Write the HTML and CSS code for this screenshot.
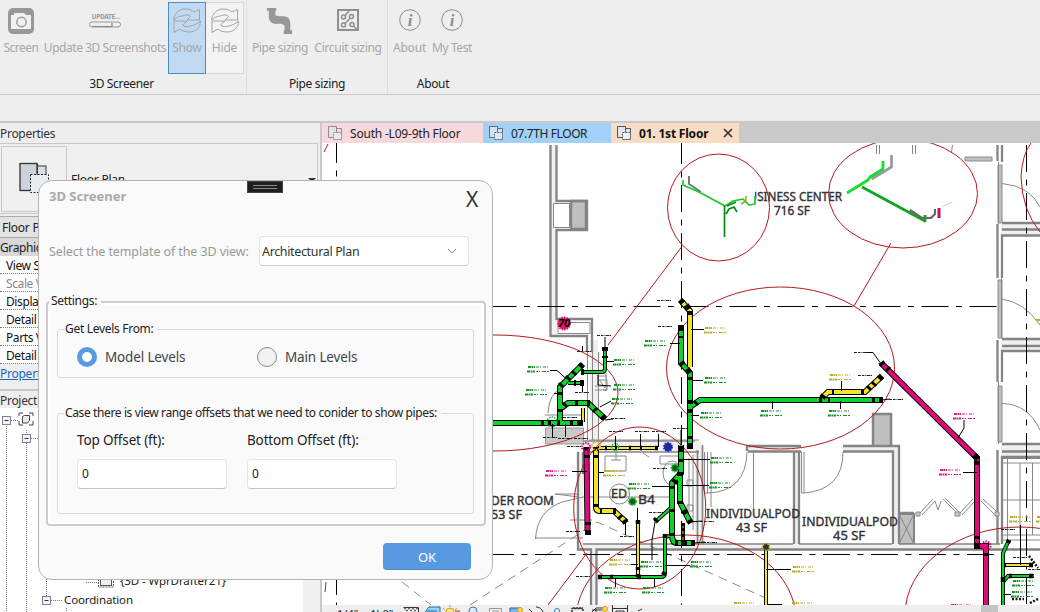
FILE: index.html
```html
<!DOCTYPE html>
<html lang="en">
<head>
<meta charset="utf-8">
<title>3D Screener</title>
<link rel="stylesheet" href="styles.css">
</head>
<body>
<div class="app">
  <header class="ribbon">
    <section class="group group-screener">
      <div class="tools">
        <div class="tool tool-screen">
          <svg class="icon" width="28" height="28" viewBox="0 0 28 28"><rect x="1" y="1" width="26" height="26" rx="5" fill="#989898"/><path d="M4 8h3V6h4v2h13v14H4z" fill="#f1f1f1"/><path d="M9 8l2-2h6l2 2" fill="#f1f1f1"/><circle cx="14.500" cy="15" r="4.700" fill="#f1f1f1" stroke="#989898" stroke-width="1.400"/></svg>
          <span>Screen</span>
        </div>
        <div class="tool tool-update">
          <svg class="icon" width="34" height="28" viewBox="0 0 34 28"><text x="3.500" y="12" class="update-text" textLength="28">UPDATE...</text><rect x="1.500" y="15" width="31" height="5" rx="2.500" fill="#eee" stroke="#999" stroke-width="1"/><path d="M4 19.500h20v-3.500" fill="none" stroke="#888" stroke-width="1.200"/></svg>
          <span>Update 3D Screenshots</span>
        </div>
        <div class="tool tool-show">
          <svg class="icon" width="30" height="28" viewBox="0 0 30 28"><use href="#refresh"/></svg>
          <span>Show</span>
        </div>
        <div class="tool tool-hide">
          <svg class="icon" width="30" height="28" viewBox="0 0 30 28"><use href="#refresh"/></svg>
          <span>Hide</span>
        </div>
      </div>
      <h2>3D Screener</h2>
    </section>
    <section class="group group-pipe">
      <div class="tools">
        <div class="tool tool-pipe">
          <svg class="icon" width="30" height="30" viewBox="0 0 30 30"><path d="M1 1h10v3h-1v5h1l3 1h4c5 0 8 2 8 8v7h2v4H19v-4h1v-5l-3-2h-4C6 19 3 15 3 10V4H1z" fill="#979797"/></svg>
          <span>Pipe sizing</span>
        </div>
        <div class="tool tool-circuit">
          <svg class="icon" width="24" height="28" viewBox="0 0 24 28" fill="none" stroke="#8f8f8f"><rect x="2" y="3" width="20" height="20" stroke-width="2"/><g stroke-width="1.500"><circle cx="7.500" cy="10" r="2"/><circle cx="15.500" cy="9.500" r="2"/><circle cx="7.500" cy="18" r="2"/><circle cx="16" cy="17.500" r="2"/><path d="M9 8.500l4-4.500M9 16.500l5-5M17.500 19l3 3"/></g></svg>
          <span>Circuit sizing</span>
        </div>
      </div>
      <h2>Pipe sizing</h2>
    </section>
    <section class="group group-about">
      <div class="tools">
        <div class="tool tool-about">
          <svg class="icon" width="24" height="28" viewBox="0 0 24 28"><circle cx="12" cy="13" r="10.300" fill="none" stroke="#8d8d8d" stroke-width="1"/><text x="12" y="19" class="info">i</text></svg>
          <span>About</span>
        </div>
        <div class="tool tool-test">
          <svg class="icon" width="24" height="28" viewBox="0 0 24 28"><circle cx="12" cy="13" r="10.300" fill="none" stroke="#8d8d8d" stroke-width="1"/><text x="12" y="19" class="info">i</text></svg>
          <span>My Test</span>
        </div>
      </div>
      <h2>About</h2>
    </section>
  </header>
  <div class="options-bar"></div>
  <main class="workspace">
    <aside class="side">
      <h3 class="side-title">Properties</h3>
      <div class="type-box">
        <div class="type-thumb">
          <svg width="32" height="32" viewBox="0 0 32 32"><rect x="17" y="4" width="10" height="24" fill="#d9dee6" stroke="#333"/><rect x="1" y="1.500" width="17" height="27" fill="#ccd3dd" stroke="#333" stroke-width="1.300"/><rect x="11.500" y="12.500" width="18" height="18" fill="#e9edf2" stroke="#222" stroke-dasharray="2 1.500"/><path d="M18.500 2v11" stroke="#222" stroke-dasharray="2 1.500"/></svg>
        </div>
        <span class="type-name">Floor Plan</span>
        <span class="caret"></span>
      </div>
      <div class="selector">Floor Plan: 01. 1st Floor</div>
      <div class="cat">Graphics</div>
      <div class="prop">View Scale</div>
      <div class="prop dim">Scale Value</div>
      <div class="prop">Display Model</div>
      <div class="prop">Detail Level</div>
      <div class="prop">Parts Visibility</div>
      <div class="prop">Detail Number</div>
      <div class="help">Properties help</div>
      <h3 class="side-title browser-title">Project Browser</h3>
      <div class="tree">
        <svg width="303" height="204" viewBox="0 408 303 204">
          <g stroke="#777" stroke-dasharray="1 1"><path d="M6.500 426v186M26.500 430v4M26.500 443v169M46.500 579v17M11 420.500h7M31 438.500h8M86 582.500h11M51 600.500h11M66.500 608v4"/></g>
          <g fill="#f3f4fa" stroke="#7d8290"><rect x="2.500" y="416.500" width="8" height="8"/><rect x="22.500" y="434.500" width="8" height="8"/><rect x="42.500" y="596.500" width="8" height="8"/></g>
          <path d="M4.500 420.500h4M24.500 438.500h4M44.500 600.500h4" stroke="#334"/>
          <g fill="none" stroke="#444"><path d="M23 413h-4v3M29 413h4v3M19 421v4h4M33 421v4h-4"/><path d="M22.500 416.500l2-1h5v5l-2 2.500h-5z" fill="#e8eaee"/></g>
          <rect x="100.500" y="576" width="11" height="9.500" fill="#eee" stroke="#555"/><path d="M98.500 576v11h15v-11" fill="none" stroke="#555" stroke-dasharray="2 1"/>
          <text x="120" y="585" class="tree-text" textLength="106">{3D - WprDrafter21}</text>
          <text x="64" y="603.500" class="tree-text" textLength="69">Coordination</text>
        </svg>
      </div>
    </aside>
    <section class="view">
      <nav class="tabs">
        <div class="tab tab-south"><svg width="16" height="16" viewBox="0 0 16 16"><use href="#sheet"/></svg><span>South -L09-9th Floor</span></div>
        <div class="tab tab-seven"><svg width="16" height="16" viewBox="0 0 16 16"><use href="#sheet"/></svg><span>07.7TH FLOOR</span></div>
        <div class="tab tab-first"><svg width="16" height="16" viewBox="0 0 16 16"><use href="#sheet"/></svg><span>01. 1st Floor</span><svg class="close" width="10" height="10" viewBox="0 0 10 10"><path d="M1 1l8 8M9 1l-8 8" stroke="#333" stroke-width="1.700"/></svg></div>
      </nav>
      <svg class="plan" width="718" height="462" viewBox="322 143 718 462">
        <defs>
          <g id="refresh" fill="none" stroke="#a3a3a3" stroke-width="1" stroke-linejoin="round"><path d="M1.500 13C2 7 7 2 13 2c4 0 7 1 9 3l5.500-2.500V13H15l3.500-3.500c-2-2-5-2-8-.5-2 0-6 1-9 4z"/><path d="M28.500 14c0 7-5 11-11.500 11-4 0-7-1-9-3l-6 3.500V14h13l-4.500 4c2 2 5 2 8 1 3-.500 7-2 10-5z"/></g>
          <g id="sheet" stroke="#555" fill="#dfe6ef"><path d="M7.500 3.500h7v11h-7z"/><path d="M1.500 1.500h8v11h-8z"/><path d="M6.500 7.500h8v7h-8z" fill="#edf1f6" stroke-dasharray="2 1"/></g>
          <g id="tag" fill="none" stroke="currentColor"><path d="M1 1h7" stroke-width="1.800" stroke-dasharray="3 .5 2 .5"/><path d="M9 1h13" stroke-dasharray="3 1 1 2" stroke-width="1"/><path d="M0 5.500h8" stroke-width="1.800" stroke-dasharray="3 .5 2 .5"/><path d="M9 5.500h14" stroke-dasharray="2 1 1 2 4 1" stroke-width="1"/></g>
          <path id="mark" d="M0 0h3M4 0h2M6.500 0h1M8.500 0h4M13 0h1" stroke="#222" stroke-width="1"/>
          <path id="green" d="M490 423H583M560 423V387L582 365M560 409L568 403H588L604 418M681 328V363L690 373V447M690 407L700 400H880M681 445V473L672 483V536Q672 543 678 543H693M680 472V502L690 522"/>
          <path id="green-thin" d="M568 383H583M581 372H602Q605 372 605 368V347M672 507L655 522M673 535L665 537V573Q665 577 661 577H598M1003 605V553L1009 540M1003 582L1008 576H1034"/>
          <path id="yellow" d="M682 302L690 311V367M596 448V507Q596 511 600 511H614L626 522M822 398L828 392H865L882 376"/>
          <path id="yellow-thin" d="M598 448H658M638 522V576M766 549V605M1004 565H1033M583 422V408"/>
          <path id="magenta" d="M881 363L977 458V546H986V605M586.500 448L587.500 531"/>
        </defs>

        <rect x="322" y="143" width="718" height="462" fill="#fff"/>

        <!-- walls -->
        <g fill="#bfbfbf" stroke="#848484">
          <path d="M549.500 145h8v192h-8z" fill="#f1f1f1" stroke="none"/>
          <path d="M571 201h15v28h-15zM873 414h18v33h-18z" stroke-width="2.500"/>
          <path d="M899 514h15v30h-15z" stroke-width="2"/>
          <path d="M899 514l15 30M914 514l-15 30" stroke-width="1"/>
          <path d="M545.500 428h38v16h-38z" stroke="#999" fill="#c9c9c9"/>
          <path d="M965 157h27v4h-27zM998 165h4v58h-4zM998 280h4v58h-4zM998 386h4v56h-4z" stroke="#8c8c8c"/>
        </g>
        <g fill="#f0f0f0"><path d="M577 544h423v7H577zM583 441h118v11H583zM695 445h8v99h-8zM747 446h55v6h-55zM843 446h56v6h-56zM793 450h6v94h-6zM893 450h6v94h-6zM1001 223h40v13h-40zM1001 339h40v12h-40zM1001 443h40v13h-40zM590 340h8v100h-8zM577 452h6v92h-6zM591 550h5v55h-5z"/></g>
        <g fill="none" stroke="#848484" stroke-width="2.300">
          <path d="M550.500 145V336H587V352M556.500 145V201H587V230H556.500V319H592V352"/>
          <path d="M578 452V549.500H591V605M596.500 605V549.500H1040M583 452V474M748 451.500H801M843 451.500H893V544M799 452V544M794 452V544M899 544V446H843M801 446H747V451M899 513H914"/>
          <path d="M583 544H793M799 544H892M899 544H1000" stroke-width="1.500"/>
          <path d="M583 441H695M583 452H699M697.500 450V544M702.500 445V544" stroke-width="1.700"/>
          <path d="M1002 145V162M997.500 145V161M1002 223H1040M1002 229.500H1040M1040 235.500H1002V278M997.500 224V278M1002 339H1040M1002 346H1040M1040 351H1002V382M997.500 340V382M1002 444H1040M1002 451.500H1040M1040 457H1002V544M997.500 450V544"/>
        </g>
        <g fill="none" stroke="#888" stroke-width="1">
          <path d="M553.500 203.500h16v24h-16z" fill="#fff"/>
          <path d="M558 322.500h32v11h-32zM587.500 352v88M592.500 352v88M589 440h110M598.500 440V352"/>
          <path d="M876.500 145v9M879.500 145v9M912.500 145v9M915.500 145v9M951.500 152l1-7M998.500 162v62M1001.500 278v60M998.500 382v62"/>
          <path d="M1002 183.500Q1030 186 1040 207M1002 299Q1024 302 1040 325M1002 403.500Q1028 404 1040 430"/>
          <path d="M801.500 452v41h2.500v-41M804 493Q843 490 843 452M747 452Q746 492 707 493M704.500 452v41h3v-41M753.500 452v58"/>
          <path d="M920 513L933 499M922 515L935 501L938 510L941 501M943 499L957 513M945 498L959 512M960 513L973 499M962 515L975 501M981 501L994 514M983 499L997 512"/>
          <path d="M916 512h4v4h-4zM955 512h5v4h-5zM995 512h4v4h-4z" fill="#ccc"/>
          <path d="M1003 458.500h37M1003 463h37M1003 535h37M1003 540h37M1007.500 457v87M1020 463v72M1032.500 463v72M1003 500h37"/>
          <path d="M545 415h38M548 413Q549 393 562 388M598 378l7 10M600 380h7v10h-12M595 386h12M597 376h10M606 373v18M603 390h3"/>
          <path d="M605 456h21v15h-21zM616 451v9M611 460h10M535.500 539Q537 511 562 502L583 497M535 538h48M577 494h-22l24 3M583 497H670M570 520H592"/>
          <circle cx="619.500" cy="494" r="10"/><ellipse cx="672" cy="473" rx="9" ry="12"/><path d="M660 456h22v8h-22zM643 453l6 4M689 458v52M693 455v75M687 480h6v6h-6zM687 505h6v6h-6zM711 452v55"/>
        </g>
        <g fill="none" stroke="#888" stroke-dasharray="9 6"><path d="M402 582L431 605M470 605L597 522L770 600"/></g>

        <!-- grid lines -->
        <g stroke="#000" stroke-width="1" stroke-dasharray="27 7.500 6 7.500">
          <path d="M489.500 306.500H998"/>
          <path d="M487 554.500H998"/>
          <path d="M681.500 137V605"/>
          <path d="M1026.500 145V605"/>
          <path d="M336.500 136V605"/>
        </g>

        <!-- callouts -->
        <g fill="none" stroke="#b51a1a" stroke-width="1">
          <ellipse cx="718.500" cy="207.500" rx="51" ry="53.500"/>
          <ellipse cx="903" cy="193.500" rx="74.500" ry="54.500"/>
          <ellipse cx="780.500" cy="368" rx="114" ry="81"/>
          <ellipse cx="495" cy="393" rx="123" ry="58"/>
          <ellipse cx="639.700" cy="508" rx="66" ry="81"/>
          <ellipse cx="686" cy="620" rx="110" ry="85"/>
          <ellipse cx="1020" cy="615" rx="115" ry="88"/>
          <path d="M1031 143Q1022 155 1021 177Q1022 210 1040 232M681.500 247L608 345M891 243L854 306M548 605L587 553M324 152l4-8M325 592l1-10"/>
        </g>

        <!-- room names -->
        <clipPath id="room-clip"><path d="M755 185h100v40H755z"/></clipPath>
        <g class="room">
          <text x="741" y="201" textLength="101" lengthAdjust="spacingAndGlyphs" clip-path="url(#room-clip)">BUSINESS CENTER</text>
          <text x="774" y="215" textLength="36" lengthAdjust="spacingAndGlyphs">716 SF</text>
          <text x="491" y="505" textLength="63" lengthAdjust="spacingAndGlyphs">DER ROOM</text>
          <text x="491" y="519" textLength="31" lengthAdjust="spacingAndGlyphs">53 SF</text>
          <text x="706" y="518" textLength="94" lengthAdjust="spacingAndGlyphs">INDIVIDUALPOD</text>
          <text x="736" y="532" textLength="31" lengthAdjust="spacingAndGlyphs">43 SF</text>
          <text x="802" y="526" textLength="96" lengthAdjust="spacingAndGlyphs">INDIVIDUALPOD</text>
          <text x="833" y="540" textLength="32" lengthAdjust="spacingAndGlyphs">45 SF</text>
          <text x="611" y="498" textLength="16" lengthAdjust="spacingAndGlyphs">ED</text>
          <text x="638" y="504" textLength="17" lengthAdjust="spacingAndGlyphs">B4</text>
        </g>

        <!-- pipes -->
        <g fill="none" stroke="#000" stroke-width="6"><use href="#green"/><use href="#yellow"/><use href="#magenta"/></g>
        <g fill="none" stroke="#000" stroke-width="4"><use href="#green-thin"/><use href="#yellow-thin"/></g>
        <g fill="none" stroke="#10d22b" stroke-width="4"><use href="#green"/><use href="#green-thin" stroke-width="2.200"/></g>
        <g fill="none" stroke="#f5e32b" stroke-width="4"><use href="#yellow"/><use href="#yellow-thin" stroke-width="2"/></g>
        <g fill="none" stroke="#dc0b7c" stroke-width="4.200"><use href="#magenta"/></g>
        <path fill="none" stroke="#000" stroke-width="6" d="M541 423h3M548 423h3M557 423h3M570 423h3M577 423h6M560 412v-3M560 395v-3M560 386l2-2M567 379l2-2M573 374l2-2M580 367l3-3M564 406l2-2M575 403h3M587 403h3M594 409l2 2M602 416l3 3M574 383h2M580 383h4M581 372h3M605 347v4M605 356v2M681 325v6M681 336v2M681 362l2 3M687 369l3 4M680 300l3 3M686 305l3 4M690 311v4M690 377v3M690 400v4M690 409v4M690 436v3M690 443v6M695 404l2-2M819 400h3M828 400h2M872 400h3M879 400h4M822 398l2-3M832 392h2M861 392h3M868 389l2-2M873 385l2-2M879 379l3-3M881 362l2 3M887 368l2 2M974 455l4 4M977 461v4M977 536v3M975 546h5M986 553v3M586.500 447v4M587 455v3M588 522v3M588 530v5M596 447v4M596 455v3M596 504v3M600 511h2M613 511h3M619 516l2 2M624 520l2 3M681 446v6M681 459v3M680 472v4M676 480l-2 3M672 486v3M672 509v3M672 533v3M675 543h3M682 543h5M691 543h4M680 501v3M684 510l2 4M689 520l2 3M655 521l2-2"/>
        <path fill="none" stroke="#000" stroke-width="4.500" d="M605 448h2M615 448h2M629 448h2M640 448h2M655 448h3M638 520v4M638 567v3M638 574v3M663 575l2-3M637 577h4M610 577h3M598 577h4M665 538v-4M766 546v4M1009 540l-1 3M1004 565h2M1029 565h4M1009 576h3M1029 576h4M1003 582v-5"/>
        <path d="M683 545v-22" stroke="#000" stroke-width="4" fill="none"/><path d="M683 540v-14" stroke="#e6d42b" stroke-dasharray="3 3" fill="none"/>
        <g stroke-dasharray="1.500 1">
          <circle cx="564" cy="323.500" r="6" fill="#e8156b" stroke="#e8156b" stroke-width="2"/>
          <circle cx="586" cy="447" r="4" fill="none" stroke="#d60b6f" stroke-width="2"/>
          <circle cx="596" cy="446" r="4" fill="none" stroke="#d9bd12" stroke-width="2"/>
          <circle cx="668" cy="447" r="4" fill="#22278a" stroke="#1720d0" stroke-width="2"/>
          <circle cx="632.500" cy="501.500" r="3.500" fill="#145a1e" stroke="#22b43a" stroke-width="2"/>
          <circle cx="675" cy="468" r="3.500" fill="#145a1e" stroke="#22b43a" stroke-width="2"/>
          <circle cx="615" cy="447" r="3.500" fill="none" stroke="#22b43a" stroke-width="1.500"/>
          <circle cx="552" cy="422" r="5" fill="none" stroke="#22b43a" stroke-width="1.500"/>
          <circle cx="766" cy="547" r="3.500" fill="#333" stroke="#d9bd12" stroke-width="1.500"/>
          <circle cx="986" cy="546" r="4.500" fill="none" stroke="#d60b6f" stroke-width="2"/>
        </g>
        <text x="558" y="327" class="spot" textLength="12" lengthAdjust="spacingAndGlyphs">70</text>

        <!-- isometric views -->
        <g fill="none" stroke-linejoin="round">
          <path d="M689 176v8l12 8" stroke="#777" stroke-width="2"/>
          <path d="M683 180v5l16 7 26 14M725 206l8-5 10-2 6 6 6-1v-8" stroke="#18c92b" stroke-width="1.700"/>
          <path d="M724.500 206v31M726 214l3-5 5-2 3 5M727 206l9-4" stroke="#0b8a1b" stroke-width="1.700"/>
          <path d="M746 196v5l-5 3" stroke="#a8a02a" stroke-width="1.500"/>
          <path d="M891.500 155v12l-20 12" stroke="#9a9a9a" stroke-width="2.800"/>
          <path d="M883 161v8l-13 8-2 3-21 13" stroke="#19dc2c" stroke-width="2.800"/>
          <path d="M862 187l63 34v-6" stroke="#0fa61f" stroke-width="2.800"/>
          <path d="M910 210l12 8h9l4-4v-5" stroke="#666" stroke-width="2.200"/>
          <path d="M939 208v10" stroke="#b5126c" stroke-width="3"/><path d="M942 207l10-5" stroke="#f6b5cc"/>
        </g>

        <!-- leaders and annotations -->
        <g fill="none" stroke="#000" stroke-width="1"><path d="M605 337v10M691 329.500h13M670 343.500h10M550 370.500h7l9 8M554 393.500h5M606 361.500h8M598 375v10l13 1M600 407l11-6M552.500 424v13M565.500 424v13M582.500 392v-9M692 380.500h11M691 415.500h8M681 430v15M615.500 436v10M640.500 434v13M658.500 434v13M572 471.500h15M598 472.500h6M652 486.500h18M680 459.500h30M681 485.500h28M665 565.500h25M652 560v-20l3-18M637.500 508v15M630 564.500h8M615.500 578v9M654.500 578v9M625.500 522v13M772.500 401v8M840.500 401v8M841.500 381v10M864 352.500h9l7 10M963 472.500h14M958 438l6-10v-8M766 569.500h25M767 604.500h15M1003 594.500h8M1020.500 525v40M882 400l8-1M605 420l8-1M690 522l12-1M694 543l11-1M582.500 352v-6"/></g>
        <g>
          <use href="#mark" x="657" y="300.500"/><use href="#mark" x="658" y="326.500"/><use href="#mark" x="597" y="335.500"/><use href="#mark" x="577" y="351.500"/><use href="#mark" x="575" y="392.500"/><use href="#mark" x="563" y="417.500"/><use href="#mark" x="611" y="418.500"/><use href="#mark" x="543" y="437.500"/><use href="#mark" x="558" y="438.500"/><use href="#mark" x="574" y="438.500"/><use href="#mark" x="609" y="431.500"/><use href="#mark" x="635" y="431.500"/><use href="#mark" x="652" y="431.500"/><use href="#mark" x="673" y="428.500"/><use href="#mark" x="567" y="446.500"/><use href="#mark" x="653" y="468.500"/><use href="#mark" x="566" y="531.500"/><use href="#mark" x="620" y="536.500"/><use href="#mark" x="649" y="512.500"/><use href="#mark" x="700" y="521.500"/><use href="#mark" x="703" y="542.500"/><use href="#mark" x="576" y="576.500"/><use href="#mark" x="854" y="352.500"/><use href="#mark" x="858" y="375.500"/><use href="#mark" x="889" y="399.500"/><use href="#mark" x="1001" y="529.500"/><use href="#mark" x="1013" y="557.500"/><use href="#mark" x="1028" y="569.500"/>
          <path d="M1012 599h12M1029 556l9 12M1030 603l8-4" stroke="#111" stroke-width="2.500" stroke-dasharray="2 1.500"/>
        </g>
        <g color="#1d8f2a">
          <use href="#tag" x="644" y="340"/><use href="#tag" x="613" y="359"/><use href="#tag" x="527" y="366"/><use href="#tag" x="525" y="389"/><use href="#tag" x="613" y="384"/><use href="#tag" x="611" y="398"/><use href="#tag" x="704" y="377"/><use href="#tag" x="700" y="412"/><use href="#tag" x="710" y="457"/><use href="#tag" x="709" y="482"/><use href="#tag" x="628" y="483"/><use href="#tag" x="690" y="561"/><use href="#tag" x="640" y="561"/><use href="#tag" x="604" y="587"/><use href="#tag" x="642" y="587"/><use href="#tag" x="760" y="410"/><use href="#tag" x="828" y="410"/><use href="#tag" x="1012" y="580"/><use href="#tag" x="1011" y="591"/>
        </g>
        <g color="#b8ae2c"><use href="#tag" x="704" y="327"/><use href="#tag" x="603" y="470"/><use href="#tag" x="609" y="559"/><use href="#tag" x="829" y="374"/><use href="#tag" x="792" y="566"/><use href="#tag" x="791" y="602"/><use href="#tag" x="733" y="602"/><use href="#tag" x="1009" y="516"/><use href="#tag" x="1036" y="516"/><path d="M1036 320h4" stroke="currentColor" stroke-width="2"/></g>
        <g color="#dc1f80"><use href="#tag" x="545" y="470"/><use href="#tag" x="953" y="413"/><use href="#tag" x="939" y="469"/><use href="#tag" x="950" y="604"/></g>
      </svg>
      <div class="view-bar">
        <span class="scale">1/4" = 1'-0"</span>
        <svg width="240" height="7" viewBox="402 605 240 7" fill="none" stroke="#333">
          <path d="M403.500 607.500h15v5" stroke-width="1"/><path d="M404 608.500h14M406 610.500h12" stroke-dasharray="2 2" stroke-width="1.500" stroke="#666"/>
          <path d="M425 612l4-5h11v5M427 611h10" stroke="#1d6fa8" fill="#9fd2f2"/>
          <circle cx="450" cy="612" r="4" stroke="#d99a13" fill="#ffe28a"/><path d="M443 608l2 2M450 605v2M457 608l-2 2" stroke="#d99a13"/><path d="M455 611h5" stroke="#933"/>
          <circle cx="473" cy="611" r="4" stroke="#3a78bd" fill="#dbeafa"/>
          <path d="M489.500 612v-3.500h12v3.500M492 611h7" stroke="#999"/>
          <path d="M510 612v-4h9v4" stroke="#1d5fa8" fill="#7db8e8"/><circle cx="520" cy="610" r="2.500" stroke="#d99a13" fill="#ffd65a"/>
          <path d="M529 609l3 3M536 607q5 0 7 5"/><circle cx="557" cy="611" r="2.500" stroke="#3a78bd"/>
          <path d="M572 612v-3.500h11v3.500M573 608h10" stroke-dasharray="2 1" stroke-width="1.500"/>
          <path d="M592 612l4-4h8M596 612v-3M592 610h10"/><circle cx="605" cy="609" r="2.500" stroke="#d99a13" fill="#ffd65a"/>
          <path d="M612.500 605v7M627.500 605v7M613 608.500h14M616 612v-1h8v1"/><path d="M638 611l4-2"/>
        </svg>
        <span class="thumb"></span>
      </div>
    </section>
  </main>

  <div class="dialog">
    <div class="grip"><i></i><i></i></div>
    <div class="dialog-head"><h1>3D Screener</h1><span class="dialog-close">X</span></div>
    <div class="template-row">
      <label>Select the template of the 3D view:</label>
      <div class="combo"><span>Architectural Plan</span><svg width="10" height="6" viewBox="0 0 10 6"><path d="M1 1l4 4 4-4" fill="none" stroke="#888"/></svg></div>
    </div>
    <fieldset class="settings">
      <legend>Settings:</legend>
      <fieldset class="box levels">
        <legend>Get Levels From:</legend>
        <div class="radios">
          <label class="radio"><i class="dot on"></i><span>Model Levels</span></label>
          <label class="radio"><i class="dot"></i><span>Main Levels</span></label>
        </div>
      </fieldset>
      <fieldset class="box offsets">
        <legend>Case there is view range offsets that we need to conider to show pipes:</legend>
        <div class="fields">
          <div class="field"><label>Top Offset (ft):</label><div class="input">0</div></div>
          <div class="field"><label>Bottom Offset (ft):</label><div class="input">0</div></div>
        </div>
      </fieldset>
    </fieldset>
    <div class="dialog-foot"><button class="ok">OK</button></div>
  </div>
</div>
</body>
</html>
```
FILE: styles.css
```css
* { box-sizing: border-box; }
body { margin: 0; font-family: "Noto Sans", "Open Sans", sans-serif; font-size: 11.5px; letter-spacing: -0.25px; color: #222; }
h1, h2, h3 { margin: 0; font-weight: 400; }
.app { position: relative; width: 1040px; height: 612px; overflow: hidden; display: flex; flex-direction: column; background: #eee; }

/* ribbon */
.ribbon { display: flex; height: 95px; border-bottom: 1px solid #c6c6c6; background: #eee; }
.group { display: flex; flex-direction: column; border-right: 1px solid #dcdcdc; height: 93px; }
.group-screener { width: 247px; }
.group-pipe { width: 141px; }
.group-about { border-right: 0; width: 90px; }
.tools { display: flex; height: 77px; padding-top: 2px; flex: none; }
.tool { display: flex; flex-direction: column; align-items: center; height: 72px; padding-top: 4px; color: #a6a6a6; font-size: 12px; line-height: 16px; letter-spacing: -0.2px; white-space: nowrap; border: 1px solid transparent; }
.tool .icon { height: 28px; margin-bottom: 5px; flex: none; }
.tool-screen { width: 42px; letter-spacing: -0.5px; }
.tool-update { width: 126px; letter-spacing: -0.45px; }
.tool-show { width: 38px; background: #c2daf1; border-color: #4c8bcb; }
.tool-hide { width: 38px; border-color: #d6d6d6; border-left: 0; background: #f3f3f3; }
.tool-pipe { width: 66px; letter-spacing: -0.35px; }
.tool-circuit { width: 70px; letter-spacing: -0.3px; }
.tool-about { width: 43px; }
.tool-test { width: 42px; letter-spacing: -0.4px; }
.group h2 { font-size: 12px; line-height: 14px; text-align: center; letter-spacing: -0.35px; color: #222; }
.group-screener h2 { padding-right: 3px; }
.update-text { font: 700 6.5px "Noto Sans", sans-serif; fill: #999; }
.info { font: italic 700 17px "Liberation Serif", serif; fill: #8d8d8d; text-anchor: middle; }
.options-bar { height: 28px; border-bottom: 2px solid #c9c9c9; flex: none; }

/* left side */
.workspace { display: flex; height: 489px; }
.side { width: 322px; border-right: 2px solid #c9c9c9; display: flex; flex-direction: column; background: #eee; }
.side-title { height: 20px; line-height: 21px; font-size: 12px; letter-spacing: -0.3px; color: #333; flex: none; }
.type-box { display: flex; height: 71px; border: 1px solid #c8c8c8; border-left: 0; margin-right: 2px; padding: 2px 1px 0 1px; flex: none; background: #f0f0f0; }
.type-thumb { width: 66px; height: 66px; border: 1px solid #c8c8c8; padding: 15px 0 0 17px; }
.type-name { padding: 26px 0 0 4px; line-height: 16px; flex: 1; font-size: 12px; }
.caret { border: 4px solid transparent; border-top-color: #333; height: 0; margin-top: 32px; }
.selector { height: 22px; line-height: 21px; margin-top: 2px; border-top: 1px solid #aaa; border-bottom: 1px solid #aaa; padding-left: 2px; font-size: 12px; flex: none; background: #e3e3e3; }
.cat { height: 18px; line-height: 20px; background: #d8d8d8; font-size: 12px; letter-spacing: -0.4px; flex: none; }
.prop { height: 18px; line-height: 19px; background: #fff; border-bottom: 1px dotted #777; padding-left: 6px; font-size: 12px; letter-spacing: -0.4px; color: #111; flex: none; }
.prop.dim { color: #888; }
.help { height: 27px; line-height: 19px; color: #1a65bd; text-decoration: underline; font-size: 12px; border-bottom: 2px solid #c6c6c6; flex: none; }
.browser-title { height: 17px; line-height: 20px; }
.tree { flex: 1; background: #fff; border-right: 17px solid #f0f0f0; overflow: hidden; }
.tree svg { display: block; }
.tree-text { font-size: 11.5px; letter-spacing: 0; fill: #222; }

/* view */
.view { flex: 1; display: flex; flex-direction: column; }
.tabs { display: flex; height: 20px; background: #c9c9c9; flex: none; }
.tab { display: flex; align-items: center; padding-left: 5px; gap: 7px; font-size: 12px; color: #222; white-space: nowrap; }
.tab-south { width: 161px; background: #f5d9dc; letter-spacing: -0.2px; }
.tab-south svg { opacity: .6; }
.tab-seven { width: 128px; background: #a1d1f6; letter-spacing: -0.4px; }
.tab-seven svg { opacity: .8; }
.tab-first { width: 128px; background: #f8dcc3; font-weight: 700; letter-spacing: -0.2px; color: #111; }
.tab .close { margin-left: 8px; }
.plan { display: block; flex: none; }
.room { font: 12.5px "Noto Sans", sans-serif; letter-spacing: 0; fill: #333; stroke: #333; stroke-width: .4; }
.spot { font: italic 700 10px "Noto Sans", sans-serif; }
.view-bar { display: flex; height: 7px; background: #eee; overflow: hidden; }
.scale { width: 80px; padding-left: 15px; font-size: 11px; line-height: 17px; letter-spacing: 0; white-space: nowrap; }
.view-bar svg { flex: none; }
.thumb { width: 17px; margin-left: 339px; background: #c4c4c4; }

/* dialog */
.dialog { position: absolute; left: 38px; top: 180px; width: 455px; height: 400px; border: 1px solid #b4b4b4; border-radius: 14px; background: #fafafa; padding: 0 7px; }
.grip { position: absolute; left: 208px; top: 0; width: 36px; height: 12px; background: #1f1f1f; border: 1px solid #444; padding: 3px 5px 0; }
.grip i { display: block; height: 1px; background: #888; margin-bottom: 2px; }
.dialog-head { display: flex; justify-content: space-between; height: 55px; padding: 6px 7px 0 3px; }
.dialog-head h1 { font-weight: 700; font-size: 13px; line-height: 19px; color: #aaa; letter-spacing: 0; }
.dialog-close { font-size: 21px; line-height: 24px; color: #333; font-weight: 400; }
.template-row { display: flex; height: 30px; padding-left: 3px; align-items: center; }
.template-row label { width: 210px; font-size: 12.5px; color: #999; letter-spacing: -0.1px; white-space: nowrap; }
.combo { display: flex; align-items: center; justify-content: space-between; width: 210px; height: 30px; padding: 0 11px 0 2px; background: #fff; border: 1px solid #e3e3e3; border-bottom-color: #ccc; border-radius: 4px; font-size: 12.5px; letter-spacing: -0.35px; color: #333; }
fieldset { margin: 0; min-width: 0; }
legend { line-height: 18px; height: 18px; font-size: 12px; letter-spacing: -0.3px; color: #222; padding: 0 4px 0 2px; white-space: nowrap; }
.settings { height: 233px; width: 440px; margin-top: 27px; border: 2px solid #ccc; border-radius: 4px; padding: 9px 10px 0 9px; box-shadow: inset 0 0 0 2px #fff; }
.settings > legend { margin-left: -8px; line-height: 16px; background: #fafafa; }
.box { border: 1px solid #d3dadf; border-radius: 3px; padding: 0 0 0 19px; }
.box > legend { margin-left: -13px; padding-left: 1px; }
.levels { height: 58px; }
.offsets { height: 110px; margin-top: 26px; }
.offsets > legend { letter-spacing: -0.38px; }
.radios { display: flex; padding-top: 9px; }
.radio { display: flex; align-items: center; width: 180px; gap: 8px; font-size: 13.5px; line-height: 20px; letter-spacing: -0.15px; color: #444; }
.dot { width: 20px; height: 20px; border: 1px solid #888; border-radius: 50%; background: #f2f2f2; }
.dot.on { border: 5px solid #5a9ae0; background: #fff; }
.fields { display: flex; gap: 20px; padding-top: 8px; }
.field { width: 150px; }
.field label { display: block; font-size: 13.5px; line-height: 20px; height: 29px; letter-spacing: -0.15px; color: #222; white-space: nowrap; }
.input { height: 30px; line-height: 28px; padding-left: 4px; font-size: 12px; background: #fff; border: 1px solid #e6e6e6; border-bottom-color: #c4c4c4; border-radius: 4px; }
.dialog-foot { display: flex; justify-content: flex-end; padding: 17px 14px 0 0; }
.ok { width: 88px; height: 27px; border: 0; border-bottom: 1px solid #4a86c8; border-radius: 4px; background: #579ae2; color: #fff; font: 13px "Noto Sans", sans-serif; padding: 2px 0 0; }
```
